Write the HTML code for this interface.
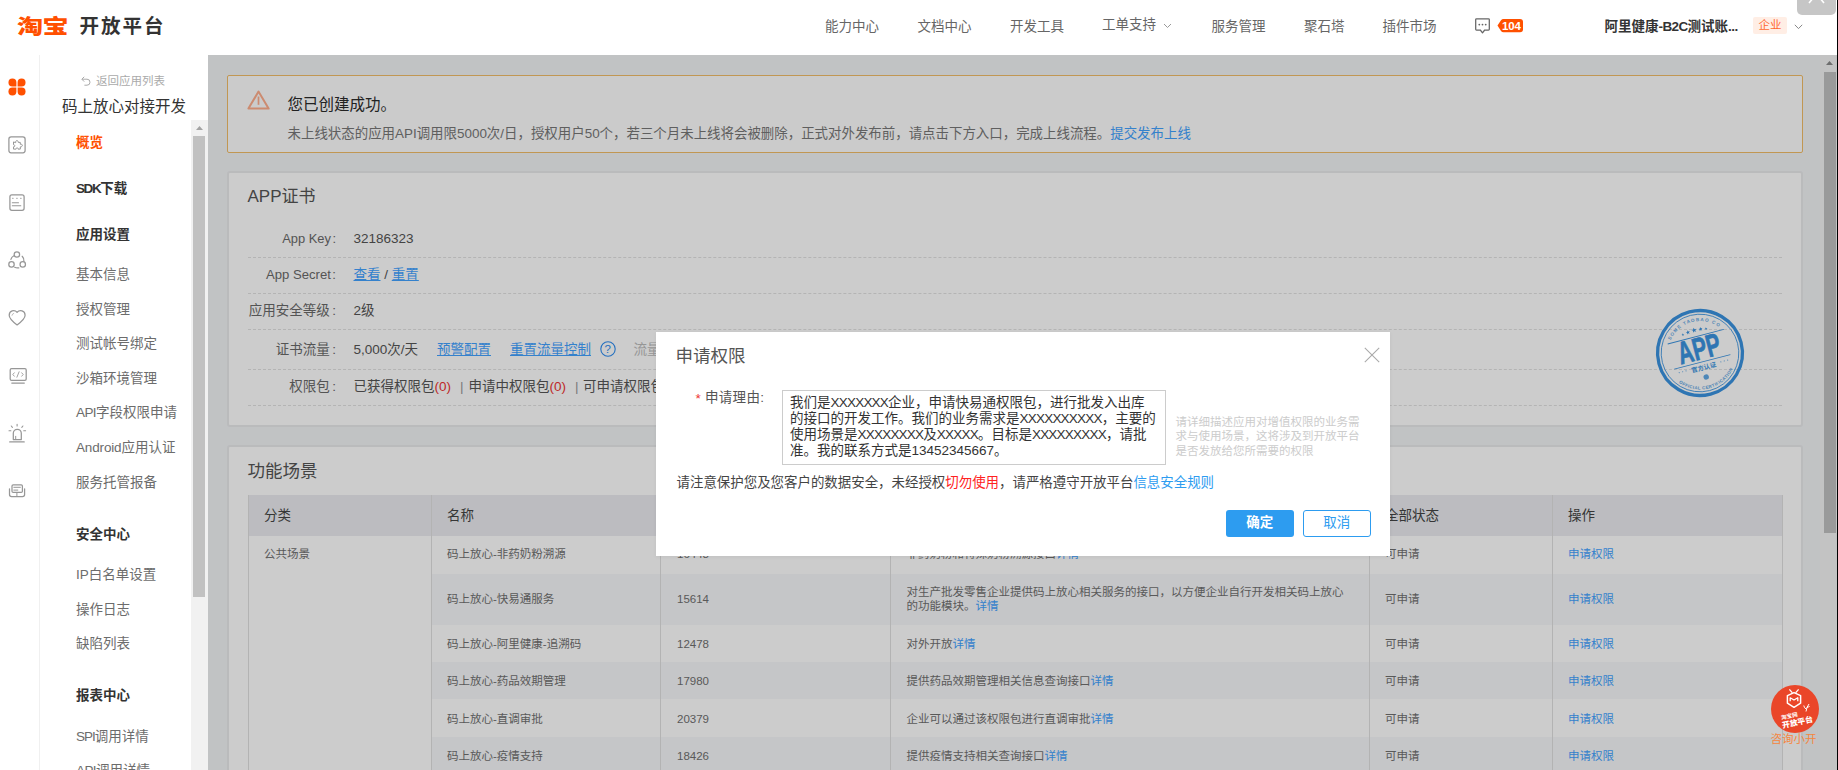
<!DOCTYPE html>
<html lang="zh-CN">
<head>
<meta charset="utf-8">
<title>淘宝开放平台</title>
<style>
*{box-sizing:border-box;margin:0;padding:0}
html,body{width:1838px;height:770px;overflow:hidden;background:#fff}
body{position:relative;font-family:"Liberation Sans","Noto Sans CJK SC",sans-serif;font-size:13.5px;color:#333;-webkit-font-smoothing:antialiased}
.a{position:absolute;white-space:nowrap}
.t{position:absolute;white-space:nowrap;line-height:20px;height:20px}
a{color:#42a2ff;text-decoration:none}
.u{text-decoration:underline}
.c{margin-left:1.5px}.c2{margin-left:2.5px}
.x{letter-spacing:-.78px}
/* header */
#hd{left:0;top:0;width:1838px;height:55px;background:#fff}
.nav{font-size:13.5px;color:#666;top:16.5px}
/* icon strip */
#strip{left:0;top:55px;width:40px;height:715px;background:#fff;border-right:1px solid #f0f0f0}
#side{left:40px;top:55px;width:168px;height:715px;background:#fff}
.ic{position:absolute;overflow:visible}
.m1{font-size:13.5px;font-weight:bold;color:#333;left:76px}
.m2{font-size:13.5px;color:#6c6c6c;left:76px}
/* main */
#main{left:208px;top:55px;width:1630px;height:715px;background:#f2f4f6;overflow:hidden}
#ov{left:208px;top:55px;width:1630px;height:715px;background:rgba(0,0,0,.2)}
.card{position:absolute;background:#fff;border-radius:3px;border:2px solid #e9eaec}
.dash{position:absolute;left:248px;width:1534px;height:0;border-top:1px dashed #e2e2e2}
.lb{font-size:13.5px;color:#6a6a6a;text-align:right;width:100px;left:236px}
.vl{font-size:13.5px;color:#555;left:353.5px}
/* table */
.th{position:absolute;top:494.5px;height:41px;background:#ebecf0}
.td{position:absolute;font-size:11.5px;color:#707070;white-space:nowrap;line-height:16px}
.row{position:absolute;left:431px;width:1351px}
.vln{position:absolute;top:494.5px;width:1px;height:290px;background:#e0e0e0}
/* modal */
#modal{left:656px;top:331.700px;width:734px;height:224.500px;background:#fff;box-shadow:0 1px 4px rgba(0,0,0,.06)}
</style>
</head>
<body>

<!-- ================= HEADER ================= -->
<div id="hd" class="a">
  <div class="t" style="left:16.5px;top:14.6px;font-size:20.5px;font-weight:900;color:#ff5000;line-height:24px;height:24px;letter-spacing:-.5px;transform:scaleX(1.27);transform-origin:0 0">淘宝</div>
  <div class="t" style="left:79.5px;top:14px;font-size:19.5px;font-weight:bold;color:#333;line-height:24px;height:24px;letter-spacing:2px">开放平台</div>

  <div class="t nav" style="left:825px">能力中心</div>
  <div class="t nav" style="left:917.5px">文档中心</div>
  <div class="t nav" style="left:1010px">开发工具</div>
  <div class="t nav" style="left:1102px;top:15px">工单支持</div>
  <svg class="ic" style="left:1163px;top:23px" width="9" height="6" viewBox="0 0 9 6"><path d="M1 1 L4.5 4.5 L8 1" fill="none" stroke="#999" stroke-width="1"/></svg>
  <div class="t nav" style="left:1211.5px">服务管理</div>
  <div class="t nav" style="left:1304px">聚石塔</div>
  <div class="t nav" style="left:1382.5px">插件市场</div>

  <!-- message icon -->
  <svg class="ic" style="left:1475px;top:18px" width="15" height="16" viewBox="0 0 15 16"><path d="M1.500 .8 H13.500 Q14.300 .8 14.300 1.600 V11.200 Q14.300 12 13.500 12 H9.700 L7.500 14.800 L5.300 12 H1.500 Q.7 12 .7 11.200 V1.600 Q.7 .8 1.500 .8 Z" fill="none" stroke="#666" stroke-width="1.250" stroke-linejoin="round"/><circle cx="4.300" cy="6.600" r=".9" fill="#666"/><circle cx="7.500" cy="6.600" r=".9" fill="#666"/><circle cx="10.700" cy="6.600" r=".9" fill="#666"/></svg>
  <!-- badge -->
  <svg class="ic" style="left:1498px;top:19px" width="25" height="13" viewBox="0 0 25 13"><path d="M-.5 6.600 L3 1.200 Q3.900 0 5.500 0 H22 Q25 0 25 3 V10.200 Q25 13.200 22 13.200 H5.500 Q3.900 13.200 3 12 Z" fill="#ff5000"/></svg>
  <div class="t" style="left:1502px;top:15.600px;font-size:11.500px;font-weight:bold;color:#fff;letter-spacing:-.2px">104</div>

  <div class="t" style="left:1604.5px;top:16.5px;font-size:13.5px;font-weight:bold;color:#333">阿里健康<span style="letter-spacing:-.6px">-B2C</span>测试账<span style="letter-spacing:-.6px">...</span></div>
  <div class="a" style="left:1753px;top:17px;width:34px;height:16.5px;background:#ffeee5;border-radius:2px"></div>
  <div class="t" style="left:1758.5px;top:15px;font-size:11.5px;color:#ff6a30">企业</div>
  <svg class="ic" style="left:1794px;top:23.5px" width="9" height="6" viewBox="0 0 9 6"><path d="M.8 .8 L4.5 4.6 L8.2 .8" fill="none" stroke="#888" stroke-width="1"/></svg>

  <!-- top-right tab -->
  <div class="a" style="left:1797px;top:-4px;width:39px;height:18.5px;background:#c6c6c6;border-radius:0 0 5px 5px"></div>
  <svg class="ic" style="left:1808px;top:-9px" width="17" height="13" viewBox="0 0 17 13"><path d="M1 12 L8.5 3 L16 12" fill="none" stroke="#fff" stroke-width="1.6"/></svg>
</div>

<!-- ================= ICON STRIP ================= -->
<div id="strip" class="a"></div>
<div id="side" class="a"></div>

<!-- ICONS -->
<svg class="ic" style="left:8px;top:78px" width="18" height="18" viewBox="0 0 18 18"><g fill="#ff5000"><path d="M4.4 .5 A4 4 0 0 1 8.4 4.5 V8.4 H4.4 A3.95 3.95 0 0 1 4.4 .5Z"/><path d="M13.6 .5 A4 4 0 0 0 9.6 4.5 V8.4 H13.6 A3.95 3.95 0 0 0 13.6 .5Z"/><path d="M4.4 17.5 A4 4 0 0 0 8.4 13.5 V9.6 H4.4 A3.95 3.95 0 0 0 4.4 17.5Z"/><path d="M13.6 17.5 A4 4 0 0 1 9.6 13.5 V9.6 H13.6 A3.95 3.95 0 0 1 13.6 17.5Z"/></g></svg>


<!-- strip icons -->
<svg class="ic" style="left:0;top:130px" width="40" height="380" viewBox="0 130 40 380" fill="none" stroke="#979797" stroke-width="1.25" stroke-linecap="round" stroke-linejoin="round">
  <!-- puzzle -->
  <rect x="8.9" y="136.8" width="16.2" height="16" rx="2.2"/>
  <path d="M15.6 142.3 c-.5-1.6 1.9-2.6 2.5-.8 l.2 .9 h2 v1.9 c1.900-.7 2.900 1.700 1.100 2.400 l-1.100 .2 v2.200 h-2.300 c.5-1.500-2.100-1.700-1.900 0 h-2.600 v-2.300 c1.500 .5 1.900-2.100 0-2.100 v-2.400 z" stroke-width="1"/>
  <!-- doc -->
  <rect x="9.9" y="194.8" width="14.2" height="15.5" rx="2"/>
  <path d="M12.600 198.300 h.5 M16.700 198.300 h.5 M20.600 198.300 h.5 M12.300 202.800 h6.200 M12.300 205.700 h8.500" stroke-width="1.100"/>
  <!-- share -->
  <circle cx="16.900" cy="254.500" r="2.700"/><circle cx="11.500" cy="264.400" r="2.700"/><circle cx="22.750" cy="264.400" r="2.700"/>
  <path d="M13.900 255.800 Q11.500 257 10.900 259.300 M22.200 256.300 Q24.300 258.500 23.900 261.300 M14.700 267.300 Q16.700 268.300 18.800 267.800"/>
  <!-- heart -->
  <path d="M17.100 324.900 C12.500 321.500 9.200 318.700 9.200 315.200 C9.200 310.500 14.500 309.300 17.100 312.300 C19.700 309.300 25.100 310.500 25.100 315.200 C25.100 318.700 21.700 321.500 17.100 324.900 Z"/>
  <path d="M12 315.300 q.2-1.600 1.700-1.900" stroke-width=".9" stroke="#b5b5b5"/>
  <!-- monitor -->
  <rect x="10.200" y="368.600" width="16" height="11.800" rx="1.300"/>
  <path d="M11.800 383.100 h12.500"/>
  <path d="M14.300 372.800 l-1.500 1.700 l1.500 1.700 M19.100 371.800 l-2.200 5.400 M21.700 372.800 l1.500 1.700 l-1.500 1.700" stroke-width=".9"/>
  <!-- alarm -->
  <path d="M13.300 439.600 v-6.300 a4 4 0 0 1 8 0 v6.300 z"/>
  <path d="M9.700 441.900 h14.500"/>
  <path d="M15.700 436.300 v3" stroke-width="1"/>
  <path d="M17.100 424.300 v1.700 M11.300 426 l1.100 1.300 M22.900 426 l-1.100 1.300 M9 430.700 h1.900 M23.700 430.700 h1.900" stroke-width="1.100"/>
  <!-- machine -->
  <rect x="12" y="484.800" width="10.400" height="7.600" rx="1.200"/>
  <path d="M13.800 487.300 h6.600 M13.800 490.100 h4" stroke-width="1"/>
  <path d="M9.500 488.800 v5.700 q0 2.100 2.100 2.100 h10.900 q2.100 0 2.100 -2.100 v-5.700"/>
  <path d="M16.900 493 v3.300" stroke-width="1"/>
</svg>

<!-- SIDEBAR TEXT -->
<svg class="ic" style="left:81px;top:75.5px" width="10" height="10" viewBox="0 0 10 10"><path d="M1 3.2 H6 A3 3 0 0 1 6 9.2 H3.4" fill="none" stroke="#aaa" stroke-width="1"/><path d="M3.2 .8 L.8 3.2 L3.2 5.6" fill="none" stroke="#aaa" stroke-width="1"/></svg>
<div class="t" style="left:96px;top:71.3px;font-size:11.5px;color:#aaa">返回应用列表</div>
<div class="t" style="left:62px;top:96.5px;font-size:15.5px;color:#333">码上放心对接开发</div>

<div class="t m1" style="top:132.5px;color:#ff5000">概览</div>
<div class="t m1" style="top:179.2px"><span style="letter-spacing:-1.4px">SDK</span>下载</div>
<div class="t m1" style="top:225.2px">应用设置</div>
<div class="t m2" style="top:265.0px">基本信息</div>
<div class="t m2" style="top:299.5px">授权管理</div>
<div class="t m2" style="top:334.1px">测试帐号绑定</div>
<div class="t m2" style="top:368.6px">沙箱环境管理</div>
<div class="t m2" style="top:403.2px"><span style="letter-spacing:-.6px">API</span>字段权限申请</div>
<div class="t m2" style="top:437.8px"><span style="letter-spacing:-.15px">Android</span>应用认证</div>
<div class="t m2" style="top:472.7px">服务托管报备</div>
<div class="t m1" style="top:525.1px">安全中心</div>
<div class="t m2" style="top:564.9px">IP白名单设置</div>
<div class="t m2" style="top:599.9px">操作日志</div>
<div class="t m2" style="top:634.2px">缺陷列表</div>
<div class="t m1" style="top:685.8px">报表中心</div>
<div class="t m2" style="top:726.5px"><span style="letter-spacing:-1px">SPI</span>调用详情</div>
<div class="t m2" style="top:761.0px"><span style="letter-spacing:-.6px">API</span>调用详情</div>

<!-- sidebar scrollbar -->
<div class="a" style="left:191px;top:120px;width:17px;height:650px;background:#f1f1f1"></div>
<div class="a" style="left:193px;top:136px;width:12.3px;height:461px;background:#c1c1c1"></div>
<svg class="ic" style="left:196px;top:126px" width="7" height="4" viewBox="0 0 7 4"><path d="M0 4 L3.5 0 L7 4 Z" fill="#a3a3a3"/></svg>

<!-- ================= MAIN ================= -->
<div id="main" class="a"></div>

<!-- alert -->
<div class="a" style="left:227px;top:74.5px;width:1575.5px;height:78px;background:#fefefe;border:1.5px solid #f2bd68;border-radius:2px"></div>
<svg class="ic" style="left:247px;top:89.5px" width="23" height="20" viewBox="0 0 23 20"><path d="M11.5 1.6 L21.6 18.6 H1.4 Z" fill="none" stroke="#ffae8c" stroke-width="2" stroke-linejoin="round"/><path d="M11.500 6.500 V14.800" stroke="#ffae8c" stroke-width="1.700"/></svg>
<div class="t" style="left:287.5px;top:95px;font-size:15.500px;font-weight:400;color:#2b2b2b">您已创建成功。</div>
<div class="t" style="left:287.5px;top:123.500px;font-size:13.450px;color:#777">未上线状态的应用API调用限5000次/日，授权用户50个，若三个月未上线将会被删除，正式对外发布前，请点击下方入口，完成上线流程。<a>提交发布上线</a></div>

<!-- card 1 -->
<div class="card" style="left:227px;top:171px;width:1576px;height:255.5px"></div>
<div class="t" style="left:247.5px;top:186.800px;font-size:17px;color:#555">APP证书</div>

<div class="t lb" style="top:228.5px;font-size:12.9px">App Key<span class="c">:</span></div>
<div class="t vl" style="top:228.5px">32186323</div>
<div class="dash" style="top:257px"></div>

<div class="t lb" style="top:264.5px;font-size:13.1px">App Secret<span class="c">:</span></div>
<div class="t vl" style="top:264.5px"><a class="u">查看</a> / <a class="u">重置</a></div>
<div class="dash" style="top:293px"></div>

<div class="t lb" style="top:301px">应用安全等级<span class="c2">:</span></div>
<div class="t vl" style="top:301px">2级</div>
<div class="dash" style="top:329px"></div>

<div class="t lb" style="top:339.5px">证书流量<span class="c2">:</span></div>
<div class="t vl" style="top:339.5px">5,000次/天</div>
<div class="t" style="left:437px;top:339.5px;font-size:13.5px"><a class="u">预警配置</a></div>
<div class="t" style="left:510px;top:339.5px;font-size:13.5px"><a class="u">重置流量控制</a></div>
<svg class="ic" style="left:600px;top:341px" width="16" height="16" viewBox="0 0 16 16"><circle cx="8" cy="8" r="7.2" fill="none" stroke="#2d8cf0" stroke-width="1.1"/></svg>
<div class="t" style="left:604.5px;top:339px;font-size:11.5px;color:#2d8cf0">?</div>
<div class="t" style="left:633.5px;top:339.5px;font-size:13.500px;color:#bcbcbc">流量包</div>
<div class="dash" style="top:369px"></div>

<div class="t lb" style="top:377px">权限包<span class="c2">:</span></div>
<div class="t vl" style="top:377px">已获得权限包<span style="color:#e33">(0)</span><span style="color:#999;margin:0 5px 0 9px">|</span>申请中权限包<span style="color:#e33">(0)</span><span style="color:#999;margin:0 4.5px 0 9px">|</span>可申请权限包<span style="color:#e33">(6)</span></div>
<div class="dash" style="top:405px"></div>

<!-- stamp -->
<svg class="ic" style="left:1653.5px;top:306.5px" width="92" height="92" viewBox="-46 -46 92 92">
  <g transform="rotate(-14.5)" fill="#3a93e0" stroke="none" font-family="'Liberation Sans','Noto Sans CJK SC',sans-serif">
    <circle r="42.4" fill="none" stroke="#3a93e0" stroke-width="3.3"/>
    <circle r="38.8" fill="none" stroke="#3a93e0" stroke-width=".8"/>
    <defs><path id="arcT" d="M-32 0 A32 32 0 0 1 32 0"/><path id="arcB" d="M-36.5 0 A36.5 36.5 0 0 0 36.5 0"/></defs>
    <text font-size="4.6" font-weight="bold" letter-spacing="1.1" opacity=".8"><textPath href="#arcT" startOffset="50%" text-anchor="middle">SOME TAOBAO CO</textPath></text>
    <text font-size="4.4" font-weight="bold" letter-spacing=".4" opacity=".85"><textPath href="#arcB" startOffset="50%" text-anchor="middle">OFFICIAL CERTIFICATION</textPath></text>
    <g transform="translate(0,-23.600)"><path id="st" d="M0 -2.6 L.75 -.8 L2.6 -.8 L1.1 .4 L1.7 2.2 L0 1.1 L-1.7 2.2 L-1.1 .4 L-2.6 -.8 L-.75 -.8 Z"/><use href="#st" transform="translate(-6.5,.6) scale(.8)"/><use href="#st" transform="translate(6.5,.6) scale(.8)"/><use href="#st" transform="translate(-12,1.6) scale(.55)"/><use href="#st" transform="translate(12,1.6) scale(.55)"/></g>
    <rect x="-29" y="-17.300" width="58" height=".9"/>
    <rect x="-29" y="8.700" width="58" height=".9"/>
    <text x="0" y="6.300" font-size="31.500" font-weight="bold" text-anchor="middle" textLength="43" lengthAdjust="spacingAndGlyphs" stroke="#3a93e0" stroke-width=".7">APP</text>
    <text x="0" y="17.200" font-size="6.300" font-weight="bold" text-anchor="middle">官方认证</text>
    <g opacity=".7"><circle cx="-25" cy="13.8" r=".6"/><circle cx="-21.5" cy="13.8" r=".6"/><circle cx="-18" cy="13.8" r=".6"/><circle cx="25" cy="13.8" r=".6"/><circle cx="21.5" cy="13.8" r=".6"/><circle cx="18" cy="13.8" r=".6"/></g>
    <circle cx="0" cy="24.8" r="2.7" opacity=".8"/>
  </g>
</svg>

<!-- card 2 -->
<div class="card" style="left:227px;top:445.2px;width:1576px;height:340px"></div>
<div class="t" style="left:247.5px;top:460.5px;font-size:17.5px;color:#555">功能场景</div>

<div class="th" style="left:248px;width:1534px"></div>
<div class="row" style="top:573.5px;height:51px;background:#f7f8fa"></div>
<div class="row" style="top:661.5px;height:37.5px;background:#f7f8fa"></div>
<div class="row" style="top:736.5px;height:37.5px;background:#f7f8fa"></div>
<div class="vln" style="left:248px"></div>
<div class="vln" style="left:431px"></div>
<div class="vln" style="left:660px"></div>
<div class="vln" style="left:890px"></div>
<div class="vln" style="left:1368.5px"></div>
<div class="vln" style="left:1551.5px"></div>
<div class="vln" style="left:1781.5px"></div>

<div class="t" style="left:264px;top:506px;font-size:13.500px;color:#444">分类</div>
<div class="t" style="left:447px;top:506px;font-size:13.500px;color:#444">名称</div>
<div class="t" style="left:677px;top:506px;font-size:13.500px;color:#444">ID</div>
<div class="t" style="left:906.5px;top:506px;font-size:13.500px;color:#444">描述</div>
<div class="t" style="left:1385px;top:506px;font-size:13.500px;color:#444">全部状态</div>
<div class="t" style="left:1568px;top:506px;font-size:13.500px;color:#444">操作</div>

<div class="td" style="left:264px;top:546px">公共场景</div>

<div class="td" style="left:447px;top:546px">码上放心-非药奶粉溯源</div>
<div class="td" style="left:677px;top:546px">16448</div>
<div class="td" style="left:906.5px;top:546px">非药奶粉和特殊奶粉溯源接口<a>详情</a></div>
<div class="td" style="left:1385px;top:546px">可申请</div>
<div class="td" style="left:1568px;top:546px"><a>申请权限</a></div>

<div class="td" style="left:447px;top:591px">码上放心-快易通服务</div>
<div class="td" style="left:677px;top:591px">15614</div>
<div class="td" style="left:906.5px;top:584.6px;line-height:14.4px">对生产批发零售企业提供码上放心相关服务的接口，以方便企业自行开发相关码上放心<br>的功能模块。<a>详情</a></div>
<div class="td" style="left:1385px;top:591px">可申请</div>
<div class="td" style="left:1568px;top:591px"><a>申请权限</a></div>

<div class="td" style="left:447px;top:636px">码上放心-阿里健康-追溯码</div>
<div class="td" style="left:677px;top:636px">12478</div>
<div class="td" style="left:906.5px;top:636px">对外开放<a>详情</a></div>
<div class="td" style="left:1385px;top:636px">可申请</div>
<div class="td" style="left:1568px;top:636px"><a>申请权限</a></div>

<div class="td" style="left:447px;top:673px">码上放心-药品效期管理</div>
<div class="td" style="left:677px;top:673px">17980</div>
<div class="td" style="left:906.5px;top:673px">提供药品效期管理相关信息查询接口<a>详情</a></div>
<div class="td" style="left:1385px;top:673px">可申请</div>
<div class="td" style="left:1568px;top:673px"><a>申请权限</a></div>

<div class="td" style="left:447px;top:711px">码上放心-直调审批</div>
<div class="td" style="left:677px;top:711px">20379</div>
<div class="td" style="left:906.5px;top:711px">企业可以通过该权限包进行直调审批<a>详情</a></div>
<div class="td" style="left:1385px;top:711px">可申请</div>
<div class="td" style="left:1568px;top:711px"><a>申请权限</a></div>

<div class="td" style="left:447px;top:748px">码上放心-疫情支持</div>
<div class="td" style="left:677px;top:748px">18426</div>
<div class="td" style="left:906.5px;top:748px">提供疫情支持相关查询接口<a>详情</a></div>
<div class="td" style="left:1385px;top:748px">可申请</div>
<div class="td" style="left:1568px;top:748px"><a>申请权限</a></div>

<!-- main scrollbar -->
<div class="a" style="left:1820px;top:55px;width:17px;height:715px;background:#f4f4f4"></div>
<div class="a" style="left:1823.800px;top:72px;width:12.400px;height:461px;background:#c1c1c1"></div>
<svg class="ic" style="left:1826px;top:61px" width="7" height="4" viewBox="0 0 7 4"><path d="M0 4 L3.5 0 L7 4 Z" fill="#8a8a8a"/></svg>

<!-- overlay -->
<div id="ov" class="a"></div>

<!-- helper widget -->
<div class="a" style="left:1771px;top:684.5px;width:48px;height:48px;border-radius:50%;background:#ea4629"></div>
<svg class="ic" style="left:1785px;top:688.5px" width="18" height="20" viewBox="0 0 18 20"><path d="M9 3.600 L15.600 6.600 V14.200 L9 18.300 L2.400 14.200 V6.600 Z" fill="none" stroke="#fff" stroke-width="1.500" stroke-linejoin="round"/><path d="M5.200 12.200 V8.800 L9 11 L12.800 8.800 V12.200" fill="none" stroke="#fff" stroke-width="1.300" stroke-linejoin="round"/><path d="M4.800 .8 L7 3.400 M13.200 .8 L11 3.400" stroke="#fff" stroke-width="1.300" stroke-linecap="round"/></svg>
<svg class="ic" style="left:1803px;top:703px" width="7" height="9" viewBox="0 0 7 9"><path d="M3 8.500 Q3.500 4 6 1 M3.200 6 Q1 5 .8 2.500 M3.800 4.500 Q5.800 4.500 6.500 3" fill="none" stroke="#fff" stroke-width="1"/></svg>
<div class="t" style="left:1781px;top:711.500px;font-size:5.600px;font-weight:bold;color:#fff;transform:rotate(-12deg);line-height:8px;height:8px">淘宝网</div>
<div class="t" style="left:1782px;top:717.500px;font-size:7.800px;font-weight:900;color:#fff;transform:rotate(-12deg);line-height:10px;height:10px">开放平台</div>
<div class="t" style="left:1770.500px;top:729px;font-size:11.500px;color:#f5863f">咨询小开</div>

<!-- ================= MODAL ================= -->
<div id="modal" class="a"></div>
<div class="t" style="left:675.500px;top:346.400px;font-size:17.500px;color:#555">申请权限</div>
<svg class="ic" style="left:1364px;top:347px" width="16" height="16" viewBox="0 0 16 16"><path d="M.8 .8 L15.2 15.2 M15.2 .8 L.8 15.2" stroke="#aaa" stroke-width="1.1"/></svg>

<div class="t" style="left:695.5px;top:388.5px;font-size:13.5px;color:#e33">*</div>
<div class="t" style="left:705px;top:387.5px;font-size:13.5px;color:#555;letter-spacing:.3px">申请理由:</div>
<div class="a" style="left:781.5px;top:390px;width:384.5px;height:75px;border:1px solid #ccc;background:#fff"></div>
<div class="a" style="left:790px;top:394.7px;font-size:13.5px;line-height:16.15px;color:#333;white-space:nowrap">我们是<span class="x">XXXXXXX</span>企业，申请快易通权限包，进行批发入出库<br>的接口的开发工作。我们的业务需求是<span class="x">XXXXXXXXXX</span>，主要的<br>使用场景是<span class="x">XXXXXXXX</span>及<span class="x">XXXXX</span>。目标是<span class="x">XXXXXXXXX</span>，请批<br>准。我的联系方式是13452345667。</div>
<div class="a" style="left:1175.5px;top:414.7px;font-size:11.5px;line-height:14.65px;color:#ccc;white-space:nowrap">请详细描述应用对增值权限的业务需<br>求与使用场景，这将涉及到开放平台<br>是否发放给您所需要的权限</div>

<div class="t" style="left:676.5px;top:472.5px;font-size:13.44px;color:#444">请注意保护您及您客户的数据安全，未经授权<span style="color:#f22">切勿使用</span>，请严格遵守开放平台<a style="color:#2d9cf0">信息安全规则</a></div>

<div class="a" style="left:1226px;top:510px;width:67.5px;height:26.5px;background:#2d9cf0;border-radius:3px"></div>
<div class="t" style="left:1226px;top:513px;width:67.5px;text-align:center;font-size:13.5px;font-weight:bold;color:#fff">确定</div>
<div class="a" style="left:1303px;top:510px;width:67.5px;height:26.5px;background:#fff;border:1px solid #2d9cf0;border-radius:3px"></div>
<div class="t" style="left:1303px;top:513px;width:67.5px;text-align:center;font-size:13.5px;color:#2d9cf0">取消</div>

<!-- right black edge -->
<div class="a" style="left:1837px;top:0;width:1px;height:770px;background:#000"></div>

</body>
</html>
